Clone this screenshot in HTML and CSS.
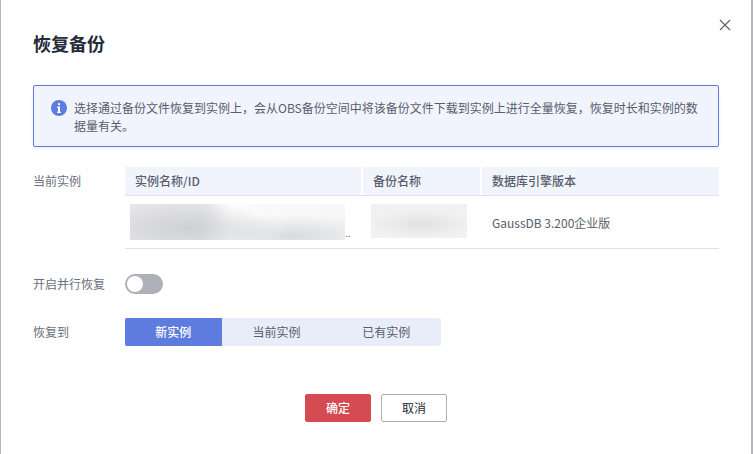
FILE: index.html
```html
<!DOCTYPE html>
<html lang="zh-CN">
<head>
<meta charset="utf-8">
<title>恢复备份</title>
<link rel="stylesheet" href="styles.css">
</head>
<body>
<div class="modal">
  <button class="close" aria-label="关闭">
    <svg width="12" height="12" viewBox="0 0 12 12"><path d="M1 1l10 10M11 1L1 11" stroke="#5f6470" stroke-width="1.2" fill="none"/></svg>
  </button>
  <h1 class="title">恢复备份</h1>
  <div class="alert">
    <svg class="alert-icon" width="16" height="16" viewBox="0 0 16 16"><circle cx="8" cy="8" r="8" fill="#5e7ce0"/><rect x="6.9" y="3" width="2.2" height="2.2" rx="1" fill="#fff"/><path d="M6 6.6h3v5.2h1v1.2H6v-1.2h1V7.8H6z" fill="#fff"/></svg>
    <p class="alert-text">选择通过备份文件恢复到实例上，会从OBS备份空间中将该备份文件下载到实例上进行全量恢复，恢复时长和实例的数据量有关。</p>
  </div>
  <div class="row row-table">
    <div class="label label-table">当前实例</div>
    <div class="table">
      <div class="thead">
        <div class="th col-a">实例名称/ID</div>
        <div class="th col-b">备份名称</div>
        <div class="th col-c">数据库引擎版本</div>
      </div>
      <div class="tbody">
        <div class="td col-a"><div class="blur blur-a"></div><span class="dots">..</span></div>
        <div class="td col-b"><div class="blur blur-b"></div></div>
        <div class="td col-c">GaussDB 3.200企业版</div>
      </div>
    </div>
  </div>
  <div class="row row-toggle">
    <div class="label">开启并行恢复</div>
    <div class="toggle"><span class="knob"></span></div>
  </div>
  <div class="row row-seg">
    <div class="label">恢复到</div>
    <div class="segments">
      <div class="seg seg-active">新实例</div>
      <div class="seg">当前实例</div>
      <div class="seg">已有实例</div>
    </div>
  </div>
  <div class="actions">
    <button class="btn btn-primary">确定</button>
    <button class="btn btn-default">取消</button>
  </div>
</div>
</body>
</html>
```
FILE: styles.css
```css
* { box-sizing: border-box; }
html, body { margin: 0; height: 100%; }
body {
  width: 753px;
  height: 454px;
  overflow: hidden;
  background: #b6b6ba;
  padding: 0 2px 0 1px;
  font-family: "Noto Sans CJK SC", "Noto Sans", sans-serif;
  font-size: 12px;
  color: #575d6c;
}
.modal {
  position: relative;
  width: 750px;
  height: 454px;
  background: #fff;
  padding: 31px 32px 0;
}
.close {
  position: absolute;
  top: 19px;
  right: 20px;
  width: 12px;
  height: 12px;
  padding: 0;
  border: 0;
  background: none;
  display: flex;
}
.title {
  margin: 0;
  font-size: 18px;
  line-height: 24px;
  font-weight: 700;
  color: #252b3a;
}
.alert {
  margin-top: 30px;
  width: 686px;
  height: 62px;
  padding: 13px 16px 0 17px;
  display: flex;
  gap: 7px;
  background: #f1f4fd;
  border: 1px solid #5e7ce0;
  border-radius: 2px;
  box-shadow: 0 1px 3px rgba(94, 124, 224, .15);
}
.alert-icon { flex: none; margin-top: 1px; }
.alert-text {
  margin: 0;
  flex: 1;
  font-size: 12px;
  line-height: 18px;
  color: #575d6c;
}
.row { display: flex; }
.label { width: 92px; flex: none; line-height: 18px; color: #6a6f7c; }
.row-table { margin-top: 20px; }
.label-table { padding-top: 5px; }
.table { width: 594px; }
.thead { display: flex; height: 29px; background: #f1f4fd; border-bottom: 1px solid #dfe1e6; }
.th {
  padding: 0 0 0 10px;
  line-height: 28px;
  font-weight: 500;
  color: #575d6c;
  border-right: 2px solid #fff;
}
.th.col-c { border-right: 0; }
.col-a { width: 238px; }
.col-b { width: 119px; }
.col-c { flex: 1; }
.tbody { display: flex; height: 53px; border-bottom: 1px solid #dfe1e6; }
.td { display: flex; align-items: flex-start; }
.tbody .col-a { padding: 8px 0 0 5px; }
.tbody .col-b { padding: 8px 0 0 8px; }
.tbody .col-c { padding-left: 10px; align-items: center; color: #575d6c; }
.blur { flex: none; }
.blur-a {
  width: 215px;
  height: 36px;
  background:
    radial-gradient(ellipse 90px 26px at 55px 24px, rgba(205, 206, 209, .9), rgba(205, 206, 209, 0)),
    radial-gradient(ellipse 90px 22px at 165px 32px, rgba(212, 213, 216, .85), rgba(212, 213, 216, 0)),
    linear-gradient(90deg, #e6e6e8 0, #e4e4e6 34%, #fbfbfb 46%, #f7f7f8 100%);
}
.blur-b {
  width: 96px;
  height: 34px;
  background:
    radial-gradient(ellipse 50px 14px at 50px 20px, rgba(226, 226, 227, 1), rgba(226, 226, 227, 0)),
    #f1f1f2;
}
.dots { line-height: 1; font-size: 10px; margin-top: 24px; color: #575d6c; }
.row-toggle { margin-top: 25px; align-items: center; height: 20px; }
.toggle {
  width: 38px;
  height: 20px;
  border-radius: 10px;
  background: #adb0b8;
  padding: 2px;
}
.knob { display: block; width: 16px; height: 16px; border-radius: 50%; background: #fff; }
.row-seg { margin-top: 24px; align-items: center; height: 28px; }
.segments {
  display: flex;
  width: 316px;
  height: 28px;
  background: #e9edfa;
  border-radius: 2px;
  overflow: hidden;
}
.seg { width: 110px; line-height: 28px; text-align: center; color: #575d6c; }
.seg-active { width: 97px; background: #5e7ce0; color: #fff; font-weight: 500; }
.actions { margin-top: 48px; display: flex; justify-content: center; gap: 10px; }
.btn {
  width: 66px;
  height: 28px;
  padding: 0;
  border-radius: 2px;
  font: inherit;
  line-height: 26px;
}
.btn-primary { background: #d64a52; border: 1px solid #d64a52; color: #fff; font-weight: 500; }
.btn-default { background: #fff; border: 1px solid #adb0b8; color: #252b3a; }
```
